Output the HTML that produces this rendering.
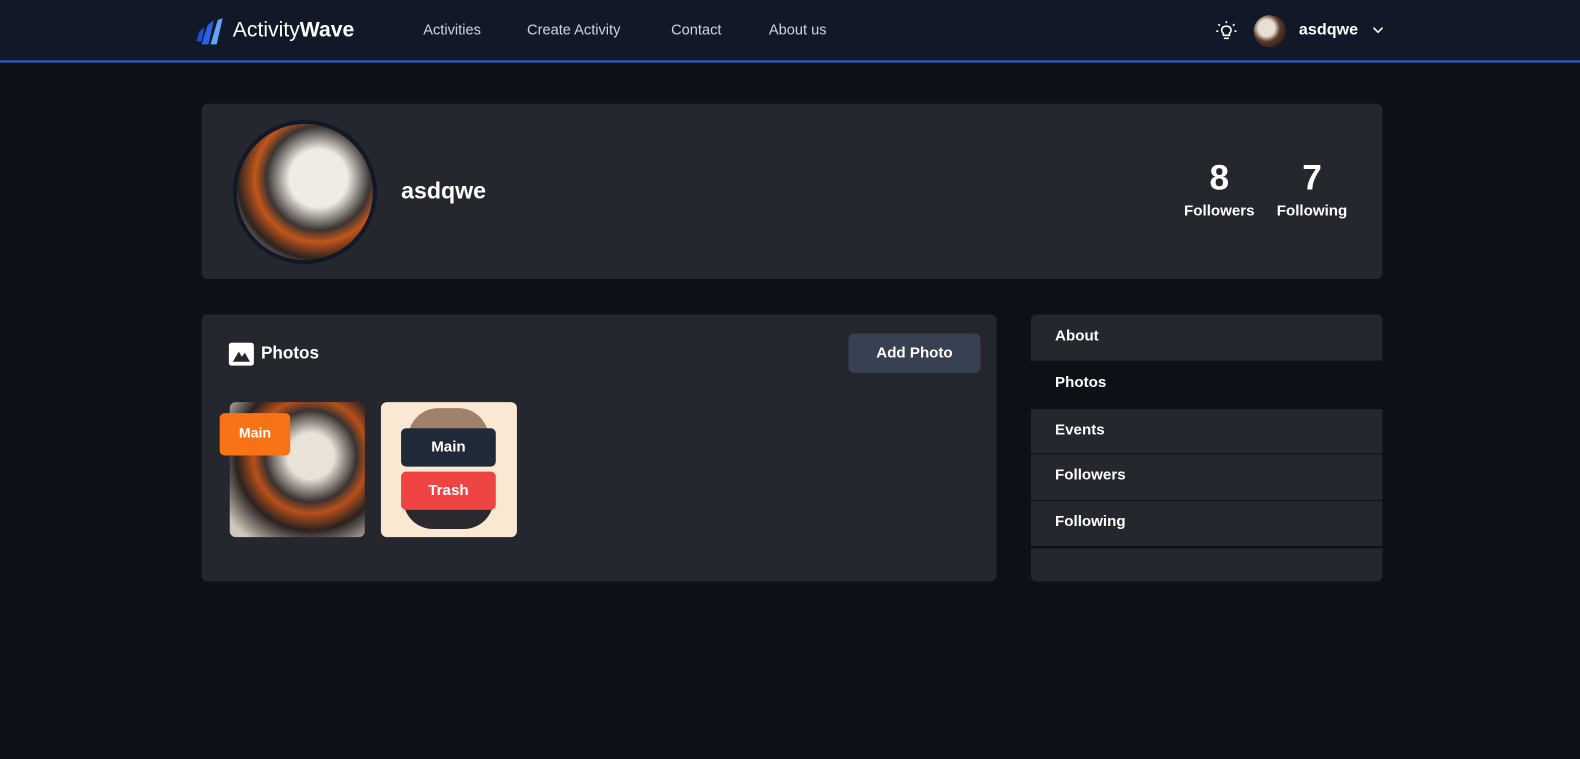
<!DOCTYPE html>
<html><head><style>
*{margin:0;padding:0;box-sizing:border-box}
body{width:1580px;height:753px;background:#0d1017;font-family:"Liberation Sans",sans-serif;color:#fff;position:relative;overflow:hidden}
#w{position:absolute;left:0;top:0;width:1568px;height:753px;transform:scale(1.0077);transform-origin:0 0}
.abs{position:absolute}
nav{position:absolute;left:0;top:0;width:1580px;height:62px;background:#111827;border-bottom:2px solid #2563eb}
.nl{position:absolute;top:22px;font-size:14.5px;color:#d1d5db}
.card{position:absolute;background:#24272d;border-radius:6px}
.side{position:absolute;left:1023px;width:349px;font-weight:bold;font-size:15px;padding-left:24px}
.b{font-weight:bold}
</style></head><body><div id="w">
<nav>
<svg class="abs" style="left:194px;top:17px" width="36" height="28" viewBox="0 0 36 28"><path d="M4 14 L9 10 L6 24 L1 24 Z" fill="#1d4ed8"/><path d="M12 8 L18 3 L13 27 L6 27 Z" fill="#2563eb"/><path d="M22 3 L27 1 L21 27 L15 27 Z" fill="#60a5fa"/></svg>
<div class="abs" style="left:231px;top:18px;font-size:21px">Activity<b>Wave</b></div>
<div class="nl" style="left:420px">Activities</div>
<div class="nl" style="left:523px">Create Activity</div>
<div class="nl" style="left:666px">Contact</div>
<div class="nl" style="left:763px">About us</div>
<svg class="abs" style="left:1206px;top:20px" width="22" height="22" viewBox="0 0 22 22" fill="none" stroke="#fff" stroke-width="1.6"><path d="M8 15 V13 C5.5 11.5 5.5 6 11 6 C16.5 6 16.5 11.5 14 13 V15 Z M8.5 18 H13.5"/><path d="M11 1v2M3 4l1.5 1.5M19 4l-1.5 1.5M1 11h2M19 11h2"/></svg>
<div class="abs" style="left:1244px;top:15px;width:32px;height:32px;border-radius:50%;background:radial-gradient(circle at 40% 40%,#e8e0d4 0 30%,#5a3a2a 50%,#2a1a14 80%)"></div>
<div class="abs b" style="left:1289px;top:21px;font-size:16px">asdqwe</div>
<svg class="abs" style="left:1362px;top:26px" width="11" height="8" viewBox="0 0 11 8"><path d="M1 1.5 L5.5 6 L10 1.5" stroke="#fff" stroke-width="1.6" fill="none"/></svg>
</nav>

<div class="card" style="left:200px;top:103px;width:1172px;height:174px"></div>
<div class="abs" style="left:231px;top:119px;width:143px;height:143px;border-radius:50%;border:4px solid #111827;background:radial-gradient(circle at 60% 40%,#f0ebe3 0 25%,#3a3432 45%,#c2561a 55%,#2b2220 70%,#d8d0c4 90%)"></div>
<div class="abs b" style="left:398px;top:176px;font-size:23px">asdqwe</div>
<div class="abs b" style="left:1170px;top:157px;width:80px;text-align:center;font-size:35px">8</div>
<div class="abs b" style="left:1165px;top:201px;width:90px;text-align:center;font-size:15px">Followers</div>
<div class="abs b" style="left:1262px;top:157px;width:80px;text-align:center;font-size:35px">7</div>
<div class="abs b" style="left:1257px;top:201px;width:90px;text-align:center;font-size:15px">Following</div>

<div class="card" style="left:200px;top:312px;width:789px;height:265px"></div>
<svg class="abs" style="left:227px;top:340px" width="25" height="23" viewBox="0 0 25 23"><rect width="25" height="23" rx="3" fill="#fff"/><path d="M4 19 L10 9 L13 14 L16 10 L21 19 Z" fill="#24272d"/></svg>
<div class="abs b" style="left:259px;top:341px;font-size:17px">Photos</div>
<div class="abs b" style="left:842px;top:331px;width:131px;height:39px;background:#374151;border-radius:5px;text-align:center;line-height:39px;font-size:15px">Add Photo</div>
<div class="abs" style="left:228px;top:399px;width:134px;height:134px;border-radius:6px;background:radial-gradient(circle at 60% 40%,#e8e2d8 0 20%,#3a3230 40%,#b8501a 50%,#2a2220 65%,#cfc7bb 90%)"></div>
<div class="abs b" style="left:218px;top:410px;width:70px;height:42px;background:#f97316;border-radius:5px;text-align:center;line-height:38px;font-size:14px">Main</div>
<div class="abs" style="left:378px;top:399px;width:135px;height:134px;border-radius:6px;background:#fae8d2"></div>
<div class="abs" style="left:405px;top:405px;width:80px;height:30px;border-radius:40px 40px 0 0;background:#a0826a"></div>
<div class="abs" style="left:400px;top:495px;width:90px;height:30px;border-radius:0 0 45px 45px;background:#2a2a2e"></div>
<div class="abs b" style="left:398px;top:425px;width:94px;height:38px;background:#1f2937;border-radius:5px;text-align:center;line-height:38px;font-size:15px">Main</div>
<div class="abs b" style="left:398px;top:468px;width:94px;height:38px;background:#ef4444;border-radius:5px;text-align:center;line-height:38px;font-size:15px">Trash</div>

<div class="side" style="top:312px;height:46px;line-height:44px;background:#24272d;border-radius:6px 6px 0 0">About</div>
<div class="side" style="top:358px;height:48px;line-height:44px;background:#0d1017">Photos</div>
<div class="side" style="top:406px;height:44px;line-height:42px;background:#24272d">Events</div>
<div class="side" style="top:451px;height:45px;line-height:42px;background:#24272d">Followers</div>
<div class="side" style="top:497px;height:45px;line-height:42px;background:#24272d">Following</div>
<div class="side" style="top:544px;height:33px;background:#24272d;border-radius:0 0 6px 6px"></div>
</div></body></html>
